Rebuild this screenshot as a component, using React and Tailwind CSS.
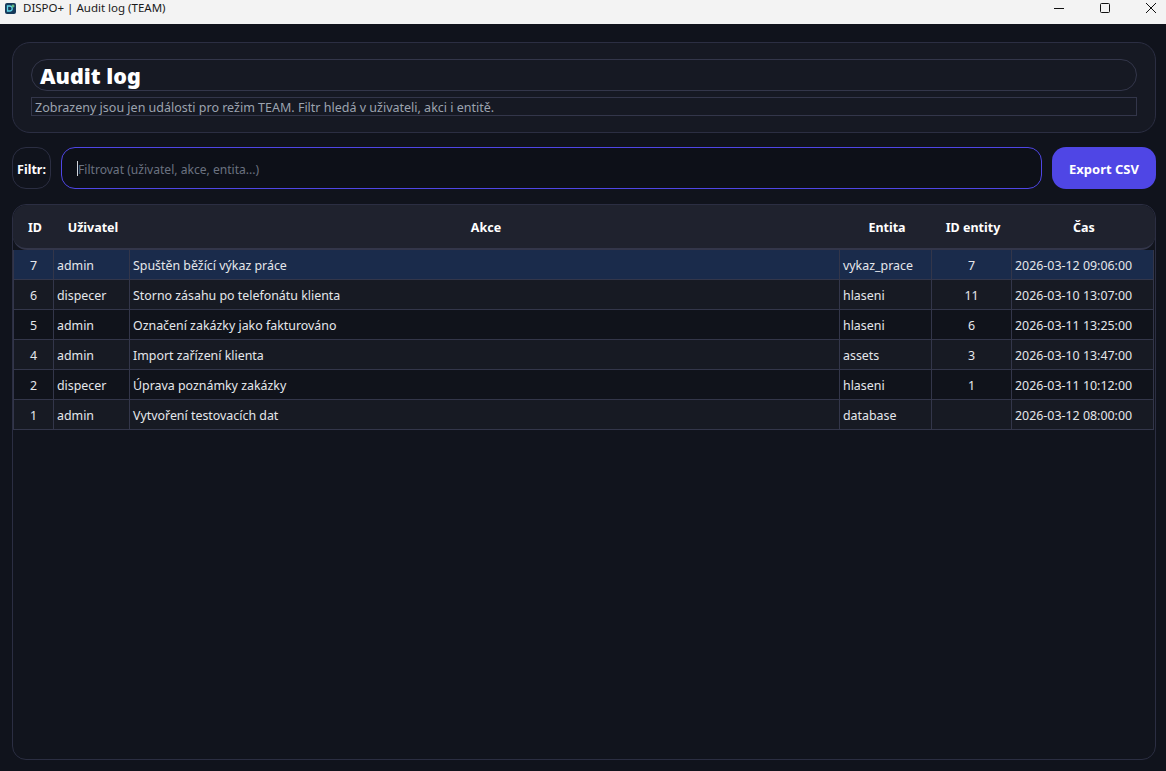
const FONT = "font-['Noto_Sans','Open_Sans',sans-serif]";
const COLS = "grid grid-cols-[40px_76px_710px_92px_80px_142px]";

const ROWS = [
  { id: 7, user: "admin", action: "Spuštěn běžící výkaz práce", entity: "vykaz_prace", entityId: "7", time: "2026-03-12 09:06:00", selected: true },
  { id: 6, user: "dispecer", action: "Storno zásahu po telefonátu klienta", entity: "hlaseni", entityId: "11", time: "2026-03-10 13:07:00", tone: "bg-[#171a23]" },
  { id: 5, user: "admin", action: "Označení zakázky jako fakturováno", entity: "hlaseni", entityId: "6", time: "2026-03-11 13:25:00", tone: "bg-[#10131b]" },
  { id: 4, user: "admin", action: "Import zařízení klienta", entity: "assets", entityId: "3", time: "2026-03-10 13:47:00", tone: "bg-[#171a23]" },
  { id: 2, user: "dispecer", action: "Úprava poznámky zakázky", entity: "hlaseni", entityId: "1", time: "2026-03-11 10:12:00", tone: "bg-[#10131b]" },
  { id: 1, user: "admin", action: "Vytvoření testovacích dat", entity: "database", entityId: "", time: "2026-03-12 08:00:00", tone: "bg-[#171a23]" },
];

function TitleBar() {
  return (
    <div className="flex h-6 items-center bg-[#f3f3f3] pb-2 text-[11.5px] text-[#1a1a1a]">
      <div className="ml-[5px] flex h-[11px] w-[11px] items-center justify-center rounded-[2px] bg-[#16395a]">
        <svg width="9" height="9" viewBox="0 0 9 9">
          <path d="M1.5 2h2.2a2.5 2.5 0 0 1 0 5H1.5z" fill="none" stroke="#5fd4e6" strokeWidth="1.3" />
          <path d="M7 .5v3M5.5 2h3" stroke="#7ce08a" strokeWidth="1" />
        </svg>
      </div>
      <span className="ml-[7px]">DISPO+ | Audit log (TEAM)</span>
      <div className="ml-auto flex items-center">
        <svg width="12" height="12" viewBox="0 0 12 12" className="mr-[34px]">
          <path d="M1 6.5h10" stroke="#111" strokeWidth="1" />
        </svg>
        <svg width="12" height="12" viewBox="0 0 12 12" className="mr-[34px]">
          <rect x="1.5" y="1.5" width="9" height="9" rx="1" fill="none" stroke="#111" strokeWidth="1" />
        </svg>
        <svg width="12" height="12" viewBox="0 0 12 12" className="mr-[9px]">
          <path d="M1 1l10 10M11 1L1 11" stroke="#111" strokeWidth="1" />
        </svg>
      </div>
    </div>
  );
}

function HeaderCard() {
  return (
    <div className="rounded-[18px] border border-[#2b2e42] bg-[#161923] px-[18px] pt-4 pb-4">
      <div className="flex h-8 items-center rounded-2xl border border-[#33364a] px-2 pt-px">
        <h1 className="text-[21.5px] leading-none font-black text-white">Audit log</h1>
      </div>
      <div className="mt-[6px] flex h-[19px] items-center border border-[#33364a] px-[3px] pt-[3px] text-[12.5px] text-[#9ca3af]">
        Zobrazeny jsou jen události pro režim TEAM. Filtr hledá v uživateli, akci i entitě.
      </div>
    </div>
  );
}

function FilterRow() {
  return (
    <div className="mt-[14px] flex h-[42px] gap-[10px]">
      <div className="flex w-[39px] items-center justify-center rounded-[14px] border border-[#2b2e42] pt-1 text-[12.5px] font-bold text-white">
        Filtr:
      </div>
      <div className="flex flex-1 items-center rounded-[14px] border border-[#4f46e5] bg-[#0d1018] pl-[15px] text-[12.1px] text-[#6b7280]">
        <span className="h-[15px] w-px bg-[#d1d5db]" />
        <span className="pt-1">Filtrovat (uživatel, akce, entita...)</span>
      </div>
      <button className="w-[104px] rounded-[14px] bg-[#4f46e5] pt-1 text-[13px] font-bold text-white">
        Export CSV
      </button>
    </div>
  );
}

function Cell({ children, center }) {
  return (
    <div className={`flex items-center border-r border-[#33364a] px-[3px] pt-1 ${center ? "justify-center" : ""}`}>
      {children}
    </div>
  );
}

function AuditTable() {
  const heads = ["ID", "Uživatel", "Akce", "Entita", "ID entity", "Čas"];
  return (
    <div className="mt-[15px] min-h-0 flex-1 rounded-[14px] border border-[#2b2e42] bg-[#11141d]">
      <div className={`${COLS} h-[45px] rounded-[14px] border-b-2 border-[#33364a] bg-[#1f222e] pl-[2px] text-[12.5px] font-bold text-white`}>
        {heads.map((h) => (
          <div key={h} className="flex items-center justify-center pt-1">{h}</div>
        ))}
      </div>
      <div className="w-[1141px] border-l border-[#33364a] text-[12.4px] text-[#e5e7eb]">
        {ROWS.map((r) => (
          <div
            key={r.id}
            className={`${COLS} h-[30px] border-b border-[#33364a] ${r.selected ? "bg-[#1a2b4b]" : r.tone}`}
          >
            <Cell center>{r.id}</Cell>
            <Cell>{r.user}</Cell>
            <Cell>{r.action}</Cell>
            <Cell>{r.entity}</Cell>
            <Cell center>{r.entityId}</Cell>
            <Cell>{r.time}</Cell>
          </div>
        ))}
      </div>
    </div>
  );
}

export default function App() {
  return (
    <div className={`flex h-[771px] flex-col overflow-hidden bg-[#10131c] ${FONT}`}>
      <TitleBar />
      <div className="flex min-h-0 flex-1 flex-col pt-[18px] pr-[10px] pb-[11px] pl-[12px]">
        <HeaderCard />
        <FilterRow />
        <AuditTable />
      </div>
    </div>
  );
}
